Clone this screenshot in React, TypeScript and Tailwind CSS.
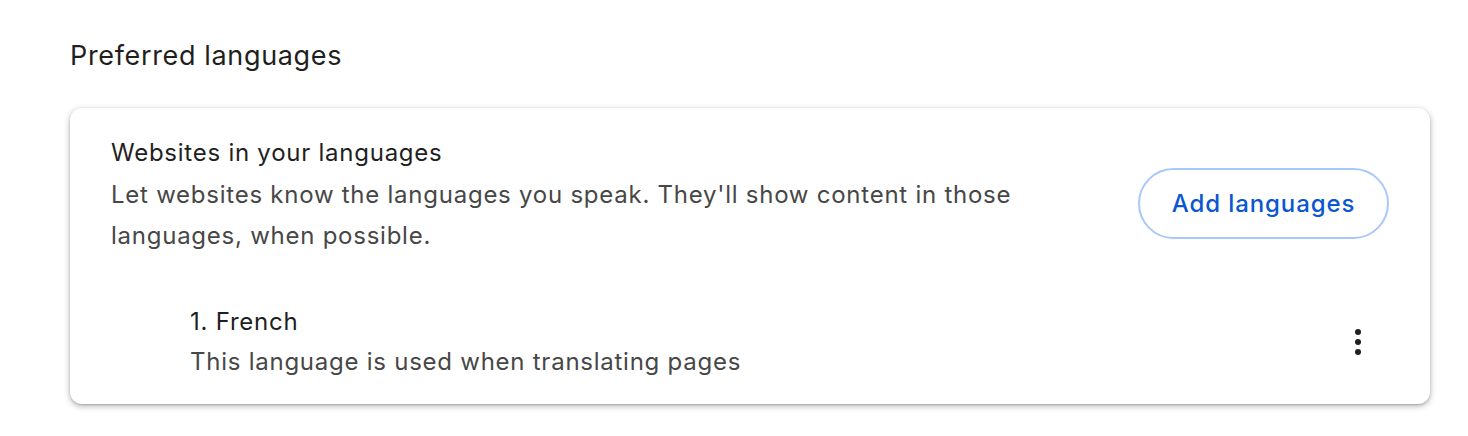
import React from 'react'

const font = { fontFamily: 'Inter, "Liberation Sans", sans-serif' }

const App = () => {
  return (
    <div className="min-h-[436px] w-full bg-white pl-[70px] pr-[38px] pt-[38px]" style={font}>
      <h2 className="text-[27px] leading-[36px] tracking-[0.65px] text-[#1f1f1f] font-normal">Preferred languages</h2>

      <div className="mt-[34px] rounded-[12px] bg-white shadow-[0_2px_6px_rgba(0,0,0,0.3),0_1px_2px_rgba(0,0,0,0.15)]">
        <div className="flex items-start pl-[41px] pr-[41px] pt-[24px]">
          <div className="flex-1 tracking-[0.75px]">
            <div className="text-[24px] leading-[42px] text-[#1f1f1f]">Websites in your languages</div>
            <p className="text-[24px] leading-[41px] text-[#474747] max-w-[915px]">
              Let websites know the languages you speak. They'll show content in those languages, when possible.
            </p>
          </div>
          <button className="mt-[36px] h-[71px] w-[251px] rounded-full border-2 border-[#a8c7fa] text-[24px] tracking-[0.9px] font-medium text-[#0b57d0]">
            Add languages
          </button>
        </div>

        <div className="mt-[46px] flex items-center pb-[22px] pl-[120px] pr-[60px]">
          <div className="flex-1 tracking-[0.75px]">
            <div className="text-[24px] leading-[40px] text-[#1f1f1f]">1. French</div>
            <div className="text-[24px] leading-[40px] text-[#474747]">This language is used when translating pages</div>
          </div>
          <svg width="24" height="26" viewBox="0 0 24 26" className="text-[#1f1f1f]">
            <circle cx="12" cy="3" r="3" fill="currentColor" />
            <circle cx="12" cy="13" r="3" fill="currentColor" />
            <circle cx="12" cy="23" r="3" fill="currentColor" />
          </svg>
        </div>
      </div>
    </div>
  )
}

export default App
